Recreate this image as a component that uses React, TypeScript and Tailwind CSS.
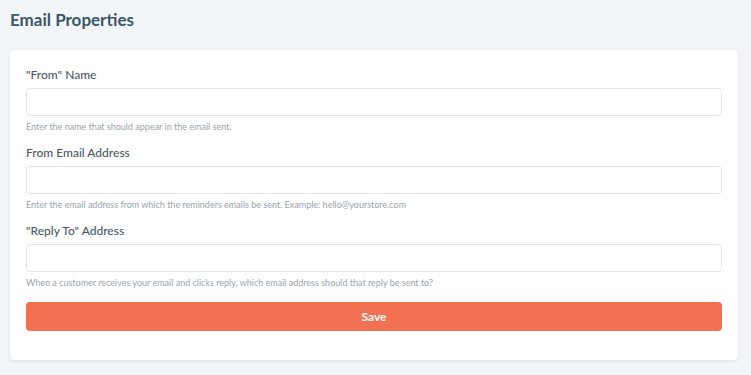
import React from "react";

const fields = [
  { label: '"From" Name', help: "Enter the name that should appear in the email sent." },
  { label: "From Email Address", help: "Enter the email address from which the reminders emails be sent. Example: hello@yourstore.com" },
  { label: '"Reply To" Address', help: "When a customer receives your email and clicks reply, which email address should that reply be sent to?" },
];

export default function App() {
  return (
    <div className="min-h-[375px] w-[751px] bg-[#f3f6f9] px-[10px] pt-[9px] font-['Lato','Noto_Sans',sans-serif]">
      <h1 className="text-[17px] leading-[22px] font-bold text-[#3b5666]">Email Properties</h1>
      <div className="mt-[19px] w-[728px] rounded-[4px] bg-white px-[16px] pt-[17px] pb-[29px] shadow-[0_1px_4px_rgba(60,80,100,0.12)]">
        <div className="flex flex-col gap-[12px]">
          {fields.map((f) => (
            <div key={f.label} className="flex flex-col">
              <label className="text-[12px] leading-[15px] font-medium text-[#4a5b66]">{f.label}</label>
              <input className="mt-[6px] h-[28px] w-full rounded-[4px] border border-[#e2e6ea] bg-white" />
              <p className="mt-[4px] text-[9px] leading-[13px] text-[#9aa4ab]">{f.help}</p>
            </div>
          ))}
        </div>
        <button className="mt-[13px] h-[29px] w-full rounded-[4px] bg-[#f27052] text-[12px] font-bold text-white">Save</button>
      </div>
    </div>
  );
}
